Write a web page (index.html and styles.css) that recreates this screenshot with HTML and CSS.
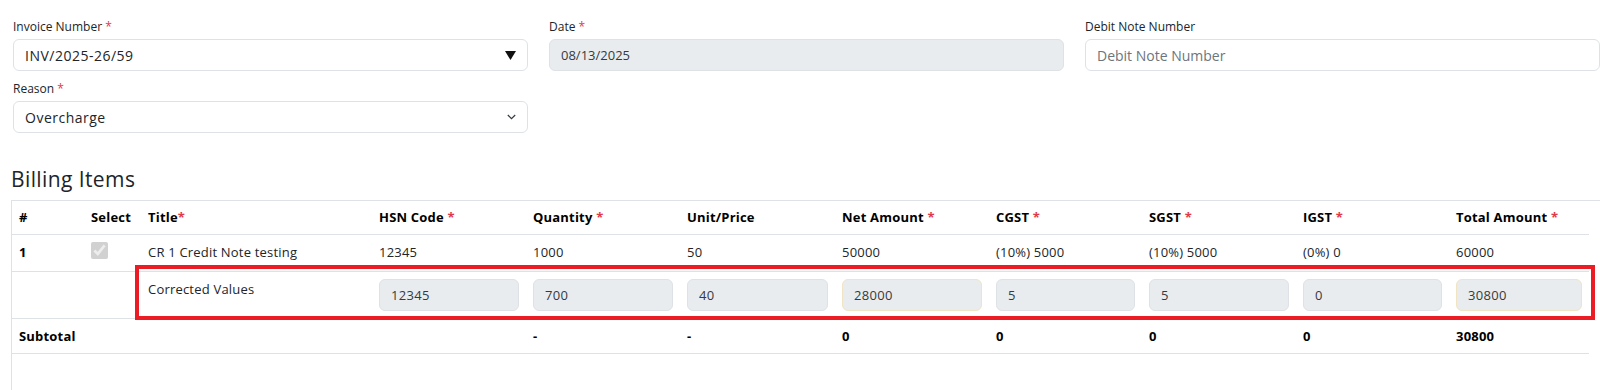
FILE: index.html
```html
<!DOCTYPE html>
<html lang="en">
<head>
    <meta charset="UTF-8">
    <meta name="viewport" content="width=device-width, initial-scale=1.0">
    <title>Debit Note</title>
    <link rel="stylesheet" href="styles.css">
</head>
<body>
    <div class="form-grid">
        <div class="form-group">
            <label>Invoice Number <span class="req">*</span></label>
            <div class="select-box">
                <span>INV/2025-26/59</span>
                <svg width="11" height="9" viewBox="0 0 11 9"><polygon points="0,0 11,0 5.5,9" fill="#111"/></svg>
            </div>
        </div>

        <div class="form-group">
            <label>Date <span class="req">*</span></label>
            <input class="form-control locked" type="text" value="08/13/2025" readonly>
        </div>

        <div class="form-group">
            <label>Debit Note Number</label>
            <input class="form-control" type="text" placeholder="Debit Note Number">
        </div>

        <div class="form-group">
            <label>Reason <span class="req">*</span></label>
            <div class="select-box">
                <span>Overcharge</span>
                <svg width="9" height="6" viewBox="0 0 9 6"><polyline points="0.8,1 4.5,4.6 8.2,1" fill="none" stroke="#343a40" stroke-width="1.2"/></svg>
            </div>
        </div>
    </div>

    <div class="billing">
        <h3>Billing Items</h3>

        <div class="table-wrap">
            <table>
                <colgroup>
                    <col style="width:72px">
                    <col style="width:57px">
                    <col style="width:231px">
                    <col style="width:154px">
                    <col style="width:154px">
                    <col style="width:155px">
                    <col style="width:154px">
                    <col style="width:153px">
                    <col style="width:154px">
                    <col style="width:153px">
                    <col style="width:140px">
                </colgroup>
                <thead>
                    <tr>
                        <th>#</th>
                        <th>Select</th>
                        <th>Title<span class="req">*</span></th>
                        <th>HSN Code <span class="req">*</span></th>
                        <th>Quantity <span class="req">*</span></th>
                        <th>Unit/Price</th>
                        <th>Net Amount <span class="req">*</span></th>
                        <th>CGST <span class="req">*</span></th>
                        <th>SGST <span class="req">*</span></th>
                        <th>IGST <span class="req">*</span></th>
                        <th>Total Amount <span class="req">*</span></th>
                    </tr>
                </thead>
                <tbody>
                    <tr class="item-row">
                        <td class="strong">1</td>
                        <td><input class="row-check" type="checkbox" checked disabled></td>
                        <td>CR 1 Credit Note testing</td>
                        <td>12345</td>
                        <td>1000</td>
                        <td>50</td>
                        <td>50000</td>
                        <td>(10%) 5000</td>
                        <td>(10%) 5000</td>
                        <td>(0%) 0</td>
                        <td>60000</td>
                    </tr>
                    <tr class="corrected-row">
                        <td></td>
                        <td></td>
                        <td>Corrected Values</td>
                        <td><input class="cell-input" type="text" value="12345" readonly></td>
                        <td><input class="cell-input" type="text" value="700" readonly></td>
                        <td><input class="cell-input" type="text" value="40" readonly></td>
                        <td><input class="cell-input calc" type="text" value="28000" readonly></td>
                        <td><input class="cell-input" type="text" value="5" readonly></td>
                        <td><input class="cell-input" type="text" value="5" readonly></td>
                        <td><input class="cell-input" type="text" value="0" readonly></td>
                        <td><input class="cell-input calc" type="text" value="30800" readonly></td>
                    </tr>
                    <tr class="subtotal-row">
                        <td colspan="4">Subtotal</td>
                        <td>-</td>
                        <td>-</td>
                        <td>0</td>
                        <td>0</td>
                        <td>0</td>
                        <td>0</td>
                        <td>30800</td>
                    </tr>
                </tbody>
            </table>

            <!-- marker drawn around the corrected row -->
            <div class="highlight"></div>
        </div>
    </div>
</body>
</html>
```

FILE: styles.css
```css
* {
    box-sizing: border-box;
    margin: 0;
    padding: 0;
    font-family: "Open Sans", sans-serif;
}

body {
    background: #fff;
    color: #212529;
    overflow: hidden;
}

.form-grid {
    display: grid;
    grid-template-columns: repeat(3, 1fr);
    column-gap: 21px;
    row-gap: 9px;
    padding: 18px 0 0 13px;
}

label {
    display: block;
    font-size: 12px;
    font-weight: 500;
    line-height: 18px;
    margin-bottom: 3px;
    color: #212529;
}

.req {
    color: #e0394a;
}

.form-control,
.select-box {
    width: 100%;
    height: 32px;
    border: 1px solid #dee2e6;
    border-radius: 6px;
    padding: 0 11px;
    font-size: 14px;
    color: #212529;
    background: #fff;
    outline: none;
}

.select-box span {
    letter-spacing: 0.5px;
}

.form-control::placeholder {
    color: #6c757d;
}

.form-control.locked {
    background: #e9ecef;
    color: #343a40;
    font-size: 13px;
}

.select-box {
    display: flex;
    align-items: center;
    justify-content: space-between;
}

.billing {
    margin-top: 32px;
    padding-left: 11px;
}

.billing h3 {
    font-size: 21px;
    font-weight: 500;
    line-height: 28px;
    letter-spacing: 0.4px;
    margin-bottom: 7px;
    color: #212529;
}

.table-wrap {
    position: relative;
    border-top: 1px solid #dee2e6;
    border-left: 1px solid #dee2e6;
    min-height: 200px;
}

table {
    width: 1577px;
    border-collapse: collapse;
    table-layout: fixed;
    font-size: 13px;
}

th,
td {
    text-align: left;
    vertical-align: top;
    padding: 7px;
    line-height: 20px;
    letter-spacing: 0.2px;
    border-bottom: 1px solid #dee2e6;
    white-space: nowrap;
}

th {
    font-weight: 700;
    color: #000;
    padding-top: 6px;
}

.item-row td {
    padding-bottom: 9px;
}

.strong,
.subtotal-row td {
    font-weight: 700;
    color: #000;
}

.row-check {
    display: block;
    width: 17px;
    height: 17px;
    margin: 0;
}

.cell-input {
    display: block;
    width: 100%;
    height: 32px;
    border: 1px solid #dee2e6;
    border-radius: 6px;
    background: #e9ecef;
    padding: 0 11px;
    font-size: 13px;
    letter-spacing: 0.3px;
    color: #343a40;
    outline: none;
}

.cell-input.calc {
    border-color: #f1e4c4;
}

.highlight {
    position: absolute;
    left: 123px;
    top: 64px;
    width: 1460px;
    height: 55px;
    border: 4px solid #ec1c24;
}
```
